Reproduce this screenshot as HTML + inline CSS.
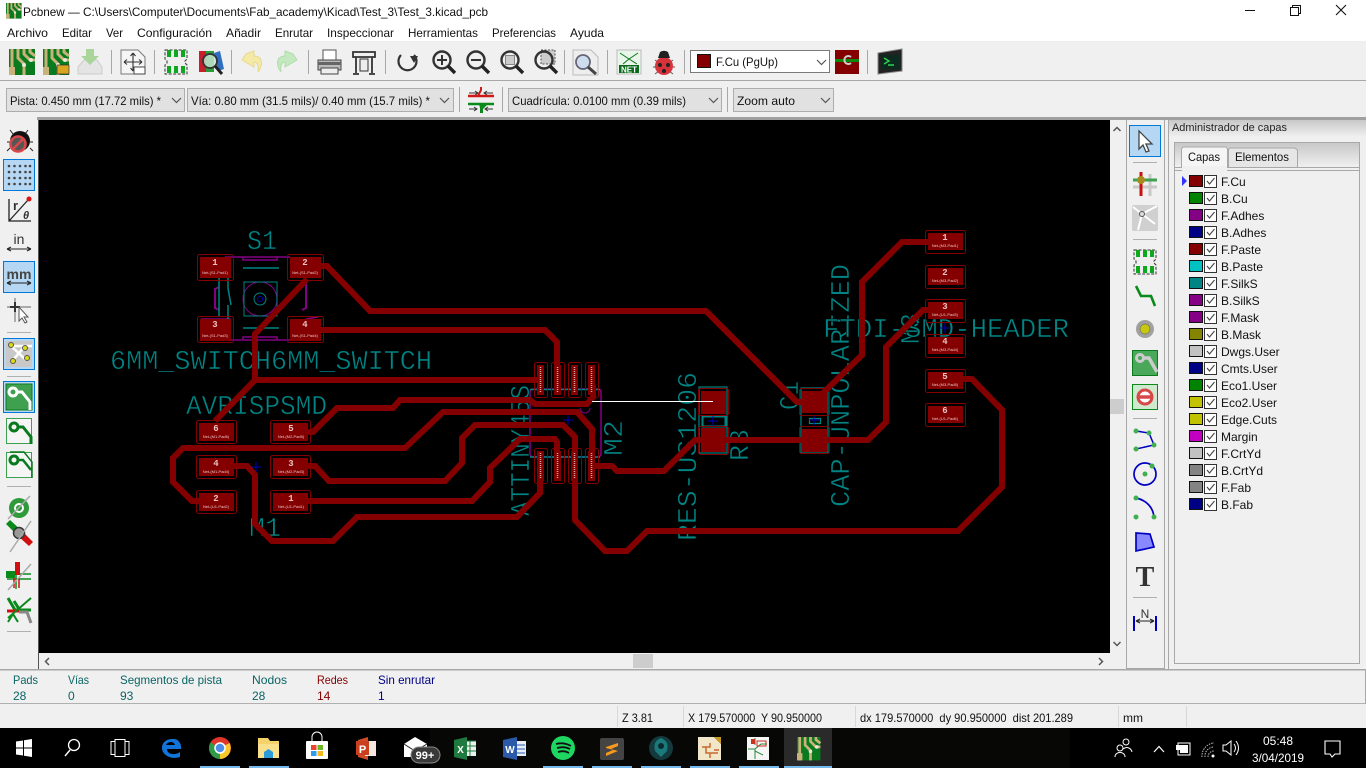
<!DOCTYPE html>
<html><head><meta charset="utf-8"><title>Pcbnew</title>
<style>
html,body{margin:0;padding:0;width:1366px;height:768px;overflow:hidden;background:#f0f0f0}
svg{display:block;font-family:"Liberation Sans",sans-serif;font-size:12px}
.silk{font-family:"Liberation Mono",monospace;font-size:27px;fill:#008484;stroke:#000;stroke-width:.55px;paint-order:fill stroke}
.tr{fill:none;stroke:#840000;stroke-width:6;stroke-linejoin:miter;stroke-linecap:butt}
.pn{font-size:9px;fill:#e8c0c0;text-anchor:middle;font-family:"Liberation Mono",monospace;font-weight:bold}
.pt{font-size:4px;fill:#e8c0c0;text-anchor:middle}
.lay{font-size:12px;fill:#111}
.sep{stroke:#a8a8a8;stroke-width:1}
.wh{fill:#fff;font-size:12px}
</style></head><body>
<svg width="1366" height="768" viewBox="0 0 1366 768" xmlns="http://www.w3.org/2000/svg">
<defs>
<g id="pcb"><rect width="26" height="26" fill="#0a7a1e"/><path d="M3 0V26M9 0V9L15 15V26M15 0V5L21 11H26M21 0V3L26 7" fill="none" stroke="#c9b27a" stroke-width="3"/><path d="M0 18H6V26H0Z" fill="#c9b27a"/><circle cx="22" cy="11" r="2" fill="#e8e8d8"/><circle cx="15" cy="16" r="2" fill="#e8e8d8"/></g>
<g id="mag"><circle cx="10" cy="10" r="8.500" fill="none" stroke="#333" stroke-width="2.400"/><path d="M16 16L23 23" stroke="#222" stroke-width="3.400"/></g>
<path id="chev" d="M0 0L4.500 4.500L9 0" fill="none" stroke="#555" stroke-width="1.200"/>
<g id="fp"><path d="M1 0H23V9L21 11V13L23 15V24H1V15L3 13V11L1 9Z" fill="#eee" stroke="#333" stroke-width="1" stroke-dasharray="3 1.500"/><rect x="3" y="0" width="4" height="7" fill="#0da81e"/><rect x="10" y="0" width="4" height="7" fill="#0da81e"/><rect x="17" y="0" width="4" height="7" fill="#0da81e"/><rect x="3" y="16" width="4" height="7" fill="#0da81e"/><rect x="10" y="16" width="4" height="7" fill="#0da81e"/><rect x="17" y="16" width="4" height="7" fill="#0da81e"/></g>
<linearGradient id="ph" x1="0" y1="0" x2="0" y2="1"><stop offset="0" stop-color="#c8c8c8"/><stop offset="1" stop-color="#f0f0f0"/></linearGradient>
</defs>

<!-- title bar and menu -->
<rect width="1366" height="22" fill="#fff"/>
<rect y="22" width="1366" height="20" fill="#fff"/>
<rect y="41" width="1366" height="1" fill="#eee"/>
<g transform="translate(6,3) scale(.6)"><use href="#pcb"/></g>
<text x="23" y="16" textLength="465" lengthAdjust="spacingAndGlyphs" fill="#111">Pcbnew — C:\Users\Computer\Documents\Fab_academy\Kicad\Test_3\Test_3.kicad_pcb</text>
<path d="M1245 10.500H1255" stroke="#111"/>
<path d="M1290.500 7.500H1298.500V15.500H1290.500ZM1292.500 7V5.500H1300.500V13.500H1299" fill="none" stroke="#111"/>
<path d="M1336 5L1346 15M1346 5L1336 15" stroke="#111" stroke-width="1.100"/>
<g fill="#111">
<text x="7" y="37" textLength="41" lengthAdjust="spacingAndGlyphs">Archivo</text>
<text x="62" y="37" textLength="30" lengthAdjust="spacingAndGlyphs">Editar</text>
<text x="106" y="37" textLength="17" lengthAdjust="spacingAndGlyphs">Ver</text>
<text x="137" y="37" textLength="75" lengthAdjust="spacingAndGlyphs">Configuración</text>
<text x="226" y="37" textLength="35" lengthAdjust="spacingAndGlyphs">Añadir</text>
<text x="275" y="37" textLength="38" lengthAdjust="spacingAndGlyphs">Enrutar</text>
<text x="327" y="37" textLength="67" lengthAdjust="spacingAndGlyphs">Inspeccionar</text>
<text x="408" y="37" textLength="70" lengthAdjust="spacingAndGlyphs">Herramientas</text>
<text x="492" y="37" textLength="64" lengthAdjust="spacingAndGlyphs">Preferencias</text>
<text x="570" y="37" textLength="34" lengthAdjust="spacingAndGlyphs">Ayuda</text>
</g>

<!-- toolbars background -->
<rect y="42" width="1366" height="78" fill="#f0f0f0"/>
<rect y="80" width="1366" height="1" fill="#a8a8a8"/>
<rect y="117" width="1366" height="3" fill="#a0a0a0"/>
<rect y="117" width="37" height="3" fill="#f0f0f0"/>
<g class="sep">
<path d="M111.500 50V74M154.500 50V74M231.500 50V74M308.500 50V74M385.500 50V74M564.500 50V74M607.500 50V74M684.500 50V74M867.500 50V74"/>
<path d="M459.500 87V112M502.500 87V112M727.500 87V112"/>
</g>

<!-- top toolbar icons -->
<use href="#pcb" x="9" y="49"/>
<use href="#pcb" x="43" y="49"/>
<rect x="57" y="65" width="12" height="9" fill="#d9a520" stroke="#333" stroke-width=".7"/>
<path d="M78 67L84 60H97L102 67V74H78Z" fill="#e4e4e4" stroke="#ccc"/><path d="M86 49H94V56H99L90 65L81 56H86Z" fill="#a9d49a"/>
<g transform="translate(121,50)"><path d="M0 0H17L24 7V24H0Z" fill="#f5f5f5" stroke="#777"/><path d="M12 3V21M3 12H21M12 3L9.500 6M12 3L14.500 6M12 21L9.500 18M12 21L14.500 18M3 12L6 9.500M3 12L6 14.500M21 12L18 9.500M21 12L18 14.500" fill="none" stroke="#333" stroke-width="1.100"/><rect x="13" y="17" width="11" height="7" fill="#fff" stroke="#444"/></g>
<use href="#fp" x="164" y="50"/>
<g transform="translate(199,51)"><rect width="7" height="21" fill="#c8202a"/><rect x="7" width="8" height="21" fill="#2a9a3a"/><path d="M15 2L21 0L25 18L19 20Z" fill="#2f6fc0"/><circle cx="11" cy="10" r="7" fill="#cfe8d8" fill-opacity=".8" stroke="#333" stroke-width="1.800"/><path d="M16 15L23 23" stroke="#222" stroke-width="3"/></g>
<path d="M246 54L254 51V56C262 56 264 64 258 72C259 65 257 62 254 62V67L242 60Z" fill="#f5e9a8" stroke="#e6d98a"/>
<path d="M293 54L285 51V56C277 56 275 64 281 72C280 65 282 62 285 62V67L297 60Z" fill="#c4e8c0" stroke="#b0dcab"/>
<g transform="translate(317,50)"><rect x="6" y="0" width="13" height="10" fill="#fff" stroke="#555"/><path d="M1 10H24V20H1Z" fill="#bbb" stroke="#444"/><rect x="4" y="18" width="17" height="6" fill="#eee" stroke="#444"/><rect x="1" y="12" width="23" height="3" fill="#666"/></g>
<g transform="translate(352,51)" fill="none" stroke="#333" stroke-width="1.800"><path d="M1 1H23V6H1ZM4 6V22M20 6V22M1 23H7M17 23H23"/><path d="M8 8H16V20H8Z" stroke-width="1" fill="#eee"/></g>
<path d="M401 55A9 9 0 1 0 414 55" fill="none" stroke="#333" stroke-width="2.200"/><path d="M410 56L418 56L414 63Z" fill="#333"/>
<g transform="translate(432,50)"><use href="#mag"/><path d="M5 10H15M10 5V15" stroke="#333" stroke-width="2"/></g>
<g transform="translate(466,50)"><use href="#mag"/><path d="M5 10H15" stroke="#333" stroke-width="2"/></g>
<g transform="translate(500,50)"><use href="#mag"/><rect x="5.500" y="5.500" width="9" height="9" fill="#ccc" stroke="#888"/></g>
<g transform="translate(534,50)"><rect x="7" y="0" width="14" height="14" fill="#ccc" stroke="#555" stroke-dasharray="2 1.500"/><use href="#mag"/></g>
<g transform="translate(573,50)"><path d="M0 0H18L25 7V25H0Z" fill="#eee" stroke="#bbb"/><circle cx="10" cy="12" r="7" fill="#cdddee" stroke="#667" stroke-width="1.800"/><path d="M15 17L23 24" stroke="#444" stroke-width="3"/></g>
<g transform="translate(617,50)"><rect width="24" height="24" fill="#eaf5ea" stroke="#bbb"/><path d="M3 3L12 9L21 3M6 14L12 9L20 14" stroke="#0a7a1e" fill="none"/><rect x="2" y="15" width="20" height="8" fill="#0a6a1a"/><text x="12" y="22.500" text-anchor="middle" style="font-size:8px;font-weight:bold" fill="#fff">NET</text></g>
<g transform="translate(653,50)"><path d="M2 10L6 13M20 10L16 13M0 17H4M22 17H18M2 24L6 21M20 24L16 21" stroke="#555"/><ellipse cx="11" cy="16" rx="9" ry="9" fill="#d8323a"/><path d="M7 2A6 5 0 0 1 15 2L17 8H5Z" fill="#222"/><circle cx="7" cy="15" r="2" fill="#222"/><circle cx="15" cy="15" r="2" fill="#222"/><circle cx="11" cy="21" r="2" fill="#222"/></g>
<rect x="690.500" y="50.500" width="139" height="22" fill="#fff" stroke="#7a7a7a"/>
<rect x="697.500" y="54.500" width="13" height="13" fill="#840000" stroke="#111"/>
<text x="716" y="66" textLength="62" lengthAdjust="spacingAndGlyphs" fill="#111">F.Cu (PgUp)</text>
<use href="#chev" x="817" y="60"/>
<rect x="835" y="50" width="24" height="24" fill="#840000"/><rect x="835" y="59" width="24" height="3" fill="#0a8a0a"/><path d="M851 57A4 4 0 1 0 851 63" fill="none" stroke="#ccc" stroke-width="2"/>
<g transform="translate(877,49)"><path d="M1 4L25 0V22L1 25Z" fill="#222" stroke="#888"/><rect x="4" y="6" width="18" height="14" fill="#0d2a20"/><path d="M7 9L12 12L7 15M11 16H17" fill="none" stroke="#2fd050" stroke-width="1.500"/></g>

<!-- second toolbar -->
<g fill="#e1e1e1" stroke="#adadad">
<rect x="6.500" y="88.500" width="178" height="23"/>
<rect x="187.500" y="88.500" width="266" height="23"/>
<rect x="508.500" y="88.500" width="213" height="23"/>
<rect x="733.500" y="88.500" width="100" height="23"/>
</g>
<g fill="#111">
<text x="10" y="105" textLength="151" lengthAdjust="spacingAndGlyphs">Pista: 0.450 mm (17.72 mils) *</text>
<text x="191" y="105" textLength="239" lengthAdjust="spacingAndGlyphs">Vía: 0.80 mm (31.5 mils)/ 0.40 mm (15.7 mils) *</text>
<text x="512" y="105" textLength="174" lengthAdjust="spacingAndGlyphs">Cuadrícula: 0.0100 mm (0.39 mils)</text>
<text x="737" y="105" textLength="58" lengthAdjust="spacingAndGlyphs">Zoom auto</text>
</g>
<use href="#chev" x="172" y="98"/><use href="#chev" x="440" y="98"/><use href="#chev" x="709" y="98"/><use href="#chev" x="821" y="98"/>
<g transform="translate(468,87)"><path d="M1 6H10M25 6H16M7 4L10 6L7 8M19 4L16 6L19 8" fill="none" stroke="#333"/><path d="M0 9H26" stroke="#d01818" stroke-width="2.500"/><path d="M10 9L13 3V0" stroke="#d01818" stroke-width="2" fill="none"/><path d="M0 17H26" stroke="#0a8a1a" stroke-width="2.500"/><path d="M11 17H20L15 22V26H12V21Z" fill="#0a8a1a"/><path d="M1 22H9M25 22H17M6 20L9 22L6 24M20 20L17 22L20 24" fill="none" stroke="#333"/></g>

<!-- canvas -->
<rect x="39" y="120" width="1071" height="533" fill="#000"/>
<rect x="38" y="120" width="1" height="550" fill="#555"/>

<!-- silk text -->
<text class="silk" x="247" y="249" textLength="30" lengthAdjust="spacingAndGlyphs">S1</text>
<text class="silk" x="110" y="369" textLength="322" lengthAdjust="spacingAndGlyphs">6MM_SWITCH6MM_SWITCH</text>
<text class="silk" x="186" y="414" textLength="141" lengthAdjust="spacingAndGlyphs">AVRISPSMD</text>
<text class="silk" x="249" y="536" textLength="32" lengthAdjust="spacingAndGlyphs">M1</text>
<text class="silk" transform="translate(529,516) rotate(-90)" textLength="131" lengthAdjust="spacingAndGlyphs">ATTINY45S</text>
<text class="silk" transform="translate(622,456) rotate(-90)" textLength="36" lengthAdjust="spacingAndGlyphs">M2</text>
<text class="silk" transform="translate(696,541) rotate(-90)" textLength="169" lengthAdjust="spacingAndGlyphs">RES-US1206</text>
<text class="silk" transform="translate(748,461) rotate(-90)" textLength="32" lengthAdjust="spacingAndGlyphs">R3</text>
<text class="silk" transform="translate(798,410) rotate(-90)" textLength="29" lengthAdjust="spacingAndGlyphs">C1</text>
<text class="silk" transform="translate(849,507) rotate(-90)" textLength="243" lengthAdjust="spacingAndGlyphs">CAP-UNPOLARIZED</text>
<text class="silk" transform="translate(919,344) rotate(-90)" textLength="31" lengthAdjust="spacingAndGlyphs">M3</text>
<text class="silk" x="823" y="337" textLength="246" lengthAdjust="spacingAndGlyphs">FTDI-SMD-HEADER</text>

<!-- S1 silk -->
<g fill="none" stroke="#840084" stroke-width="1.500">
<path d="M225 257H290M225 340H290M243 257V260H277V257M243 340V337H277V340"/>
<path d="M219 287L215 289V308L219 310M306 280V308L302 310" stroke-width="2"/>
<circle cx="260" cy="299" r="17" stroke-width="1"/>
<path d="M201 319H231M306 319L318 317" stroke-width="1.500"/>
</g>
<g fill="none" stroke="#008484" stroke-width="1.500">
<path d="M243 268H279M243 328H279M219 278V317M228 278V288L231 305M228 305V335"/>
<rect x="244" y="282" width="33" height="34" stroke-width="1"/>
<circle cx="260" cy="299" r="6" stroke-width="1"/>
</g>
<circle cx="260" cy="299" r="2.500" fill="none" stroke="#0000c0"/>

<!-- IC silk -->
<rect x="530" y="389" width="71" height="68" rx="3" fill="none" stroke="#840084" stroke-width="1.500"/>
<path d="M530 389.500H600M530 457H600" stroke="#008484" stroke-width="1.500"/>
<path d="M580 408A5 5 0 0 0 590 408" fill="none" stroke="#840084"/>

<!-- R3 / C1 silk -->
<g fill="none" stroke="#008484" stroke-width="1.200">
<rect x="699" y="387" width="28" height="66"/>
<rect x="702.500" y="416.500" width="23" height="10" stroke-width="2"/>
<rect x="801" y="388" width="27" height="65"/>
<rect x="809.500" y="418.500" width="11" height="5"/>
</g>
<g stroke="#0000c0" fill="none"><path d="M708 421H718M713 416V426M809 420H819M814 415V425M251 467H261M256 462V472M940 328H950M945 323V333M563 420H573M568 415V425"/></g>

<!-- pads -->
<g fill="#840000">
<rect x="200" y="257" width="31" height="21"/><rect x="290" y="257" width="31" height="21"/>
<rect x="200" y="319" width="31" height="22"/><rect x="290" y="319" width="31" height="22"/>
<rect x="199" y="423" width="35" height="18"/><rect x="273" y="423" width="35" height="18"/>
<rect x="199" y="458" width="35" height="18"/><rect x="273" y="458" width="35" height="18"/>
<rect x="199" y="493" width="35" height="18"/><rect x="273" y="493" width="35" height="18"/>
<rect x="928" y="233" width="35" height="17"/><rect x="928" y="268" width="35" height="17"/>
<rect x="928" y="302" width="35" height="17"/><rect x="928" y="337" width="35" height="17"/>
<rect x="928" y="372" width="35" height="17"/><rect x="928" y="406" width="35" height="17"/>
<rect x="537" y="365" width="7" height="30"/><rect x="554" y="365" width="7" height="30"/><rect x="571" y="365" width="7" height="30"/><rect x="588" y="365" width="7" height="30"/>
<rect x="537" y="451" width="7" height="30"/><rect x="554" y="451" width="7" height="30"/><rect x="571" y="451" width="7" height="30"/><rect x="588" y="451" width="7" height="30"/>
<rect x="701" y="391" width="25" height="23"/><rect x="701" y="428" width="25" height="24"/>
<rect x="802" y="391" width="25" height="22"/><rect x="802" y="429" width="25" height="23"/>
</g>
<g fill="none" stroke="#840000">
<rect x="197.500" y="254.500" width="36" height="26" rx="2"/><rect x="287.500" y="254.500" width="36" height="26" rx="2"/>
<rect x="197.500" y="316.500" width="36" height="26" rx="2"/><rect x="287.500" y="316.500" width="36" height="26" rx="2"/>
<rect x="196.500" y="420.500" width="40" height="23" rx="2"/><rect x="270.500" y="420.500" width="40" height="23" rx="2"/>
<rect x="196.500" y="455.500" width="40" height="23" rx="2"/><rect x="270.500" y="455.500" width="40" height="23" rx="2"/>
<rect x="196.500" y="490.500" width="40" height="23" rx="2"/><rect x="270.500" y="490.500" width="40" height="23" rx="2"/>
<rect x="925.500" y="230.500" width="40" height="23" rx="2"/><rect x="925.500" y="265.500" width="40" height="23" rx="2"/>
<rect x="925.500" y="299.500" width="40" height="23" rx="2"/><rect x="925.500" y="334.500" width="40" height="23" rx="2"/>
<rect x="925.500" y="369.500" width="40" height="23" rx="2"/><rect x="925.500" y="403.500" width="40" height="23" rx="2"/>
<rect x="534.500" y="362.500" width="13" height="35" rx="2"/><rect x="551.500" y="362.500" width="13" height="35" rx="2"/><rect x="568.500" y="362.500" width="13" height="35" rx="2"/><rect x="585.500" y="362.500" width="13" height="35" rx="2"/>
<rect x="534.500" y="448.500" width="13" height="35" rx="2"/><rect x="551.500" y="448.500" width="13" height="35" rx="2"/><rect x="568.500" y="448.500" width="13" height="35" rx="2"/><rect x="585.500" y="448.500" width="13" height="35" rx="2"/>
<rect x="698.500" y="388.500" width="30" height="27" rx="2"/><rect x="698.500" y="426.500" width="30" height="28" rx="2"/>
<rect x="799.500" y="388.500" width="30" height="27" rx="2"/><rect x="799.500" y="426.500" width="30" height="27" rx="2"/>
</g>

<!-- tracks -->
<g class="tr">
<path d="M320 266H327L370 311H706L797 402H815"/>
<path d="M307 279L255 334V380L215 421M255 380H540V385"/>
<path d="M320 330H545L557 342V390"/>
<path d="M306 432H313L337 408H393L400 400H530L535 404H587L593 397V385"/>
<path d="M215 501H192L173 482V458L183 448H405L443 412H577L592 429V470"/>
<path d="M232 466H247L255 475V524L272 541H333L357 517H517L540 493V470"/>
<path d="M306 466H315L329 481H445L462 463V438L475 425H563L575 437V520L605 551H627L647 531H958L1002 487V410L972 379H960"/>
<path d="M306 501H472L490 482V468L520 439H555L557 442V470"/>
<path d="M593 466H612L617 471H664L695 440H868L886 422V347L923 310H945"/>
<path d="M823 393L862 355V282L902 242H945"/>
</g>
<path d="M592 401.500H713" stroke="#fff" stroke-width="1"/>

<!-- pad labels -->
<g>
<text class="pn" x="215" y="265">1</text><text class="pt" x="215" y="274">Net-(S1-Pad1)</text>
<text class="pn" x="305" y="265">2</text><text class="pt" x="305" y="274">Net-(S1-Pad2)</text>
<text class="pn" x="215" y="327">3</text><text class="pt" x="215" y="337">Net-(S1-Pad3)</text>
<text class="pn" x="305" y="327">4</text><text class="pt" x="305" y="337">Net-(S1-Pad4)</text>
<text class="pn" x="216" y="431">6</text><text class="pt" x="216" y="438">Net-(M1-Pad6)</text>
<text class="pn" x="291" y="431">5</text><text class="pt" x="291" y="438">Net-(M2-Pad5)</text>
<text class="pn" x="216" y="466">4</text><text class="pt" x="216" y="473">Net-(M1-Pad4)</text>
<text class="pn" x="291" y="466">3</text><text class="pt" x="291" y="473">Net-(M2-Pad3)</text>
<text class="pn" x="216" y="501">2</text><text class="pt" x="216" y="508">Net-(U1-Pad2)</text>
<text class="pn" x="291" y="501">1</text><text class="pt" x="291" y="508">Net-(U1-Pad1)</text>
<text class="pn" x="945" y="240">1</text><text class="pt" x="945" y="247">Net-(M3-Pad1)</text>
<text class="pn" x="945" y="275">2</text><text class="pt" x="945" y="282">Net-(M3-Pad2)</text>
<text class="pn" x="945" y="309">3</text><text class="pt" x="945" y="316">Net-(U1-Pad3)</text>
<text class="pn" x="945" y="344">4</text><text class="pt" x="945" y="351">Net-(M3-Pad4)</text>
<text class="pn" x="945" y="379">5</text><text class="pt" x="945" y="386">Net-(M3-Pad5)</text>
<text class="pn" x="945" y="413">6</text><text class="pt" x="945" y="420">Net-(U1-Pad6)</text>
</g>
<g stroke="#d8a8a8" stroke-width="1.500" stroke-dasharray="1 1">
<path d="M540.500 367V392M557.500 367V392M574.500 367V392M591.500 367V392M540.500 453V478M557.500 453V478M574.500 453V478M591.500 453V478"/>
</g>

<!-- scrollbars -->
<rect x="1110" y="120" width="16" height="549" fill="#f0f0f0"/>
<rect x="39" y="653" width="1087" height="16" fill="#f0f0f0"/>
<rect x="1110" y="399" width="14" height="15" fill="#cdcdcd"/>
<rect x="633" y="654" width="20" height="14" fill="#cdcdcd"/>
<path d="M1113.500 131L1117 127.500L1120.500 131M1113.500 642L1117 645.500L1120.500 642M49 658L45.500 661.500L49 665M1099 658L1102.500 661.500L1099 665" fill="none" stroke="#555" stroke-width="1.500"/>

<!-- left toolbar icons -->
<rect x="0" y="120" width="38" height="550" fill="#f0f0f0"/>
<g transform="translate(7,130)"><path d="M6 4L3 0M18 4L21 0M3 12H0M23 12H26M3 18L0 21M23 18L26 21" stroke="#222"/><ellipse cx="13" cy="11" rx="10" ry="10" fill="#111"/><circle cx="11" cy="14" r="7.500" fill="#555" stroke="#d8484a" stroke-width="2.600"/><path d="M6 19L16 9" stroke="#d8484a" stroke-width="2.600"/></g>
<g fill="#b5d7f3" stroke="#0078d7">
<rect x="3.500" y="159.500" width="31" height="31"/>
<rect x="3.500" y="261.500" width="31" height="31"/>
<rect x="3.500" y="338.500" width="31" height="31"/>
<rect x="3.500" y="381.500" width="31" height="31"/>
</g>
<g fill="#444"><circle cx="9" cy="166" r="1.300"/><circle cx="14.500" cy="166" r="1.300"/><circle cx="20" cy="166" r="1.300"/><circle cx="25.500" cy="166" r="1.300"/><circle cx="30" cy="166" r="1.300"/><circle cx="9" cy="172" r="1.300"/><circle cx="14.500" cy="172" r="1.300"/><circle cx="20" cy="172" r="1.300"/><circle cx="25.500" cy="172" r="1.300"/><circle cx="30" cy="172" r="1.300"/><circle cx="9" cy="178" r="1.300"/><circle cx="14.500" cy="178" r="1.300"/><circle cx="20" cy="178" r="1.300"/><circle cx="25.500" cy="178" r="1.300"/><circle cx="30" cy="178" r="1.300"/><circle cx="9" cy="184" r="1.300"/><circle cx="14.500" cy="184" r="1.300"/><circle cx="20" cy="184" r="1.300"/><circle cx="25.500" cy="184" r="1.300"/><circle cx="30" cy="184" r="1.300"/></g>
<path d="M9 199V221H31M9 221L28 200" fill="none" stroke="#222" stroke-width="1.300"/><circle cx="29" cy="199" r="2.500" fill="#e01010"/>
<text x="13" y="210" style="font-size:13px;font-weight:bold" fill="#333">r</text>
<text x="23" y="219" style="font-size:11px;font-weight:bold;font-style:italic" fill="#333">θ</text>
<text x="19" y="244" text-anchor="middle" style="font-size:14px" fill="#333">in</text>
<path d="M7 249H31M7 249L11 247M7 249L11 251M31 249L27 247M31 249L27 251" stroke="#222" fill="none"/>
<text x="19" y="279" text-anchor="middle" style="font-size:14px;font-weight:bold" fill="#444">mm</text>
<path d="M7 283H31M7 283L11 281M7 283L11 285M31 283L27 281M31 283L27 285" stroke="#222" fill="none"/>
<path d="M15 298V322M7 307H31" stroke="#aaa" stroke-width="2"/><path d="M10 307H20M15 302V312" stroke="#333" stroke-width="2"/><path d="M19 307V321L22 318L25 323L27 322L24 317H28Z" fill="#fff" stroke="#555"/>
<path d="M7 332.500H31M7 376.500H31M7 486.500H31M7 631.500H31" stroke="#b0b0b0"/>
<rect x="6" y="341" width="26" height="26" rx="2" fill="#c8c8c8"/>
<path d="M11 346L26 360M25 346L13 360M11 346H32" stroke="#fff" stroke-width="2.500"/>
<g fill="#dcdc10" stroke="#555"><circle cx="11" cy="345" r="2.500"/><circle cx="25" cy="348" r="2.500"/><circle cx="13" cy="361" r="2.500"/><circle cx="27" cy="358" r="2.500"/></g>
<rect x="6" y="384" width="26" height="26" fill="#3fa050" stroke="#0a7a1e"/><circle cx="13" cy="392" r="4" fill="none" stroke="#fff" stroke-width="3"/><path d="M16 392H22L30 402V410" fill="none" stroke="#fff" stroke-width="3"/>
<rect x="6.500" y="418.500" width="25" height="25" fill="#f5f5f5" stroke="#3fa050"/><circle cx="14" cy="427" r="4" fill="none" stroke="#0a7a1e" stroke-width="3"/><path d="M17 427H23L31 437V444" fill="none" stroke="#0a7a1e" stroke-width="3"/>
<rect x="6.500" y="452.500" width="25" height="25" fill="#f5f5f5" stroke="#3fa050"/><circle cx="14" cy="460" r="4" fill="none" stroke="#0a7a1e" stroke-width="3"/><path d="M10 452H24L32 462V478" fill="none" stroke="#0a7a1e" stroke-width="1.500"/><path d="M17 460H23L31 470" fill="none" stroke="#0a7a1e" stroke-width="2.500"/>
<circle cx="19" cy="508" r="10" fill="#2f9a3a"/><circle cx="19" cy="508" r="5" fill="#fff"/><circle cx="19" cy="508" r="3" fill="#2f9a3a"/><path d="M8 519L30 496" stroke="#aaa" stroke-width="1.500"/>
<path d="M6 524L10 520L22 531L18 536Z" fill="#0a8a1a"/><path d="M18 536L22 531L33 542L29 546Z" fill="#d01010"/><circle cx="19" cy="533" r="5.500" fill="#999" stroke="#333" stroke-width="1.500"/><path d="M10 552L31 521" stroke="#aaa" stroke-width="1.500"/>
<path d="M16 562V589M7 574H31M7 579H31" stroke="#0a8a1a" stroke-width="1.500"/><path d="M15 562H20V575H15Z" fill="#d01010"/><rect x="6" y="571" width="9" height="7" fill="#0a8a1a"/><path d="M14 578V588M19 578V588" stroke="#d01010" stroke-width="1.500"/><path d="M8 590L31 564" stroke="#aaa" stroke-width="1.500"/>
<path d="M8 598L15 610H31M14 601L19 609" fill="none" stroke="#0a8a1a" stroke-width="3"/><path d="M7 611H19" stroke="#d01010" stroke-width="3"/><path d="M19 612H27L31 623" fill="none" stroke="#888" stroke-width="3"/><path d="M8 622L13 614L18 622M8 618L31 598" fill="none" stroke="#0a8a1a" stroke-width="2"/>

<!-- right toolbar -->
<rect x="1126" y="120" width="42" height="549" fill="#f0f0f0"/>
<rect x="1126" y="120" width="1" height="549" fill="#a8a8a8"/>
<rect x="1164" y="120" width="1" height="549" fill="#a8a8a8"/>
<rect x="1126" y="668" width="39" height="1" fill="#a8a8a8"/>
<rect x="1168" y="120" width="1" height="549" fill="#a8a8a8"/>
<rect x="1129.500" y="125.500" width="31" height="31" fill="#b5d7f3" stroke="#0078d7"/>
<path d="M1139 131V149L1143 145L1146 152L1149 151L1146 144H1152Z" fill="#fff" stroke="#444" stroke-width="1.300"/>
<path d="M1133 162.500H1157M1133 239.500H1157M1133 418.500H1157M1133 597.500H1157" stroke="#b0b0b0"/>
<path d="M1141 172V196M1150 174V196M1133 187H1157" stroke="#c8c8c8" stroke-width="3"/><path d="M1133 180H1157" stroke="#3fa050" stroke-width="3"/><path d="M1141 172V196" stroke="#c81010" stroke-width="3"/><circle cx="1141" cy="180" r="4" fill="#a88a20"/>
<rect x="1132" y="205" width="26" height="26" rx="2" fill="#d0d0d0"/><path d="M1142 214L1157 206M1142 214L1155 224M1142 214L1138 230M1142 214L1133 207" stroke="#fff" stroke-width="2"/><circle cx="1142" cy="214" r="2.500" fill="#ddd" stroke="#555"/>
<use href="#fp" x="1133" y="250"/>
<path d="M1136 286L1141 296H1151L1155 306" fill="none" stroke="#0a8a1a" stroke-width="2.600"/>
<circle cx="1145" cy="329" r="9" fill="#a0a0a0"/><circle cx="1145" cy="329" r="5" fill="#c8c810" stroke="#555" stroke-width=".5"/>
<rect x="1132.500" y="350.500" width="25" height="25" fill="#4aa85a" stroke="#0a7a1e"/><circle cx="1140" cy="358" r="3.500" fill="none" stroke="#ccc" stroke-width="3"/><path d="M1143 358H1149L1157 372" fill="none" stroke="#ccc" stroke-width="3.500"/>
<rect x="1132.500" y="384.500" width="25" height="25" fill="#cfe9cf" stroke="#0a8a1a"/><circle cx="1145" cy="397" r="7" fill="#fff" stroke="#d84848" stroke-width="3"/><path d="M1139 397H1151" stroke="#d84848" stroke-width="3.500"/>
<path d="M1136 431L1149 433L1154 445L1136 449" fill="none" stroke="#0000c0" stroke-width="1.500"/><g fill="#3fb050"><circle cx="1136" cy="431" r="2.500"/><circle cx="1149" cy="433" r="2.500"/><circle cx="1154" cy="445" r="2.500"/><circle cx="1136" cy="449" r="2.500"/></g>
<circle cx="1145" cy="474" r="11" fill="none" stroke="#0000c0" stroke-width="1.700"/><circle cx="1145" cy="474" r="2.500" fill="#3fb050"/><circle cx="1152" cy="466" r="2.500" fill="#3fb050"/>
<path d="M1136 498C1146 500 1153 507 1154 517" fill="none" stroke="#0000c0" stroke-width="1.700"/><g fill="#3fb050"><circle cx="1136" cy="498" r="2.500"/><circle cx="1136" cy="517" r="2.500"/><circle cx="1154" cy="517" r="2.500"/></g>
<path d="M1136 533L1150 534L1154 547L1136 551Z" fill="#8888ff" stroke="#0000c0" stroke-width="1.700"/>
<text x="1145" y="586" text-anchor="middle" style="font-size:28px;font-family:'Liberation Serif',serif;font-weight:bold" fill="#333">T</text>
<path d="M1134 616V631M1156 616V631" stroke="#0000c0" stroke-width="2"/><path d="M1136 621H1154M1136 621L1140 619M1136 621L1140 623M1154 621L1150 619M1154 621L1150 623" stroke="#222" fill="none"/>
<text x="1145" y="618" text-anchor="middle" style="font-size:12px" fill="#333">N</text>

<!-- layer manager -->
<rect x="1169" y="120" width="197" height="549" fill="#f0f0f0"/>
<rect x="1169" y="120" width="197" height="17" fill="url(#ph)"/>
<text x="1172" y="131" textLength="115" lengthAdjust="spacingAndGlyphs" style="font-size:11px" fill="#222">Administrador de capas</text>
<rect x="1174.500" y="142.500" width="185" height="521" fill="#f0f0f0" stroke="#a8a8a8"/>
<rect x="1175" y="143" width="184" height="24" fill="url(#ph)"/>
<path d="M1175 167.500H1359M1175 170.500H1359" stroke="#a8a8a8"/>
<path d="M1228.500 167V149.500L1230 148H1295L1297.500 150V167" fill="#e6e6e6" stroke="#a8a8a8"/>
<path d="M1181.500 168V149L1183 147H1226L1227.500 149V168" fill="#f5f5f5" stroke="#a8a8a8"/>
<rect x="1182" y="166" width="45" height="5" fill="#f0f0f0"/>
<text x="1188" y="161" textLength="32" lengthAdjust="spacingAndGlyphs" fill="#111">Capas</text>
<text x="1235" y="161" textLength="54" lengthAdjust="spacingAndGlyphs" fill="#111">Elementos</text>
<path d="M1182 176L1187 181L1182 186Z" fill="#3333ff"/>

<g stroke="#111">
<rect x="1189.500" y="175.500" width="13" height="11" fill="#840000"/>
<rect x="1189.500" y="192.500" width="13" height="11" fill="#008400"/>
<rect x="1189.500" y="209.500" width="13" height="11" fill="#840084"/>
<rect x="1189.500" y="226.500" width="13" height="11" fill="#000084"/>
<rect x="1189.500" y="243.500" width="13" height="11" fill="#840000"/>
<rect x="1189.500" y="260.500" width="13" height="11" fill="#00c2c2"/>
<rect x="1189.500" y="277.500" width="13" height="11" fill="#008484"/>
<rect x="1189.500" y="294.500" width="13" height="11" fill="#840084"/>
<rect x="1189.500" y="311.500" width="13" height="11" fill="#840084"/>
<rect x="1189.500" y="328.500" width="13" height="11" fill="#848400"/>
<rect x="1189.500" y="345.500" width="13" height="11" fill="#c2c2c2"/>
<rect x="1189.500" y="362.500" width="13" height="11" fill="#000084"/>
<rect x="1189.500" y="379.500" width="13" height="11" fill="#008400"/>
<rect x="1189.500" y="396.500" width="13" height="11" fill="#c2c200"/>
<rect x="1189.500" y="413.500" width="13" height="11" fill="#c2c200"/>
<rect x="1189.500" y="430.500" width="13" height="11" fill="#c200c2"/>
<rect x="1189.500" y="447.500" width="13" height="11" fill="#c2c2c2"/>
<rect x="1189.500" y="464.500" width="13" height="11" fill="#848484"/>
<rect x="1189.500" y="481.500" width="13" height="11" fill="#848484"/>
<rect x="1189.500" y="498.500" width="13" height="11" fill="#000084"/>
</g>
<g fill="#fff" stroke="#333">
<rect x="1204.500" y="175.500" width="12" height="12"/><rect x="1204.500" y="192.500" width="12" height="12"/><rect x="1204.500" y="209.500" width="12" height="12"/><rect x="1204.500" y="226.500" width="12" height="12"/><rect x="1204.500" y="243.500" width="12" height="12"/><rect x="1204.500" y="260.500" width="12" height="12"/><rect x="1204.500" y="277.500" width="12" height="12"/><rect x="1204.500" y="294.500" width="12" height="12"/><rect x="1204.500" y="311.500" width="12" height="12"/><rect x="1204.500" y="328.500" width="12" height="12"/><rect x="1204.500" y="345.500" width="12" height="12"/><rect x="1204.500" y="362.500" width="12" height="12"/><rect x="1204.500" y="379.500" width="12" height="12"/><rect x="1204.500" y="396.500" width="12" height="12"/><rect x="1204.500" y="413.500" width="12" height="12"/><rect x="1204.500" y="430.500" width="12" height="12"/><rect x="1204.500" y="447.500" width="12" height="12"/><rect x="1204.500" y="464.500" width="12" height="12"/><rect x="1204.500" y="481.500" width="12" height="12"/><rect x="1204.500" y="498.500" width="12" height="12"/>
</g>
<path d="M1207 181l2.500 3 5-6M1207 198l2.500 3 5-6M1207 215l2.500 3 5-6M1207 232l2.500 3 5-6M1207 249l2.500 3 5-6M1207 266l2.500 3 5-6M1207 283l2.500 3 5-6M1207 300l2.500 3 5-6M1207 317l2.500 3 5-6M1207 334l2.500 3 5-6M1207 351l2.500 3 5-6M1207 368l2.500 3 5-6M1207 385l2.500 3 5-6M1207 402l2.500 3 5-6M1207 419l2.500 3 5-6M1207 436l2.500 3 5-6M1207 453l2.500 3 5-6M1207 470l2.500 3 5-6M1207 487l2.500 3 5-6M1207 504l2.500 3 5-6" fill="none" stroke="#444" stroke-width="1.100"/>
<g class="lay">
<text x="1221" y="186">F.Cu</text><text x="1221" y="203">B.Cu</text><text x="1221" y="220">F.Adhes</text><text x="1221" y="237">B.Adhes</text><text x="1221" y="254">F.Paste</text><text x="1221" y="271">B.Paste</text><text x="1221" y="288">F.SilkS</text><text x="1221" y="305">B.SilkS</text><text x="1221" y="322">F.Mask</text><text x="1221" y="339">B.Mask</text><text x="1221" y="356">Dwgs.User</text><text x="1221" y="373">Cmts.User</text><text x="1221" y="390">Eco1.User</text><text x="1221" y="407">Eco2.User</text><text x="1221" y="424">Edge.Cuts</text><text x="1221" y="441">Margin</text><text x="1221" y="458">F.CrtYd</text><text x="1221" y="475">B.CrtYd</text><text x="1221" y="492">F.Fab</text><text x="1221" y="509">B.Fab</text>
</g>

<!-- message panel -->
<rect y="669" width="1366" height="35" fill="#f0f0f0"/>
<rect y="669" width="1366" height="1.500" fill="#a8a8a8"/>
<rect y="703" width="1366" height="1" fill="#b0b0b0"/>
<rect x="1365" y="670" width="1" height="34" fill="#a8a8a8"/>
<g fill="#0a6464">
<text x="13" y="684" textLength="25" lengthAdjust="spacingAndGlyphs">Pads</text><text x="13" y="700">28</text>
<text x="68" y="684" textLength="21" lengthAdjust="spacingAndGlyphs">Vías</text><text x="68" y="700">0</text>
<text x="120" y="684" textLength="102" lengthAdjust="spacingAndGlyphs">Segmentos de pista</text><text x="120" y="700">93</text>
<text x="252" y="684" textLength="35" lengthAdjust="spacingAndGlyphs">Nodos</text><text x="252" y="700">28</text>
</g>
<g fill="#840000"><text x="317" y="684" textLength="31" lengthAdjust="spacingAndGlyphs">Redes</text><text x="317" y="700">14</text></g>
<g fill="#000084"><text x="378" y="684" textLength="57" lengthAdjust="spacingAndGlyphs">Sin enrutar</text><text x="378" y="700">1</text></g>

<!-- status bar -->
<rect y="704" width="1366" height="24" fill="#f0f0f0"/>
<path d="M617.500 706V727M855.500 706V727M1118.500 706V727M1186.500 706V727M683.500 706V727" stroke="#d8d8d8"/>
<g fill="#111">
<text x="622" y="722" textLength="31" lengthAdjust="spacingAndGlyphs">Z 3.81</text>
<text x="688" y="722" textLength="134" lengthAdjust="spacingAndGlyphs" xml:space="preserve">X 179.570000  Y 90.950000</text>
<text x="860" y="722" textLength="213" lengthAdjust="spacingAndGlyphs" xml:space="preserve">dx 179.570000  dy 90.950000  dist 201.289</text>
<text x="1123" y="722" textLength="20" lengthAdjust="spacingAndGlyphs">mm</text>
</g>

<!-- taskbar -->
<rect y="728" width="1366" height="40" fill="#000"/>
<rect x="430" y="728" width="640" height="40" fill="#070705"/>
<rect x="784" y="728" width="48" height="40" fill="#2a2a2a"/>
<path d="M16 741.500L23 740.500V747.500H16ZM24 740.300L32 739V747.500H24ZM16 748.500H23V755.500L16 754.500ZM24 748.500H32V757L24 755.700Z" fill="#fff"/>
<circle cx="74" cy="745" r="5.500" fill="none" stroke="#fff" stroke-width="1.300"/><path d="M70 750L65 756" stroke="#fff" stroke-width="1.400"/>
<path d="M114.500 741.500H111V754.500H114.500M125.500 741.500H129V754.500H125.500M115 739.500H125V756.500H115Z" fill="none" stroke="#fff" stroke-width="1"/>
<path d="M172 739C178 738 182 744 181 749H167C167 754 174 756 180 752V757C171 760 162 755 162 748C162 742 167 739 172 739ZM166 745H175C174 741 168 741 166 745Z" fill="#1274d8"/>
<circle cx="220" cy="748" r="11" fill="#e0352a"/><path d="M220 748L229.500 743A11 11 0 0 1 220 759Z" fill="#f8c82a"/><path d="M220 748V759A11 11 0 0 1 210.500 742.500Z" fill="#2f9a48"/><circle cx="220" cy="748" r="5" fill="#4f8ce8" stroke="#fff" stroke-width="1.500"/>
<path d="M258 738H268L270 741H279V758H258Z" fill="#f5d36a"/><rect x="258" y="744" width="21" height="14" fill="#f9e08c"/><path d="M264 758V752L268.500 749L273 752V758Z" fill="#2f9ad8"/>
<rect x="306" y="741" width="22" height="18" rx="1" fill="#fff"/><path d="M312 741V737A5 5 0 0 1 322 737V741" fill="none" stroke="#fff"/><rect x="311" y="745" width="5.500" height="5" fill="#e8452a"/><rect x="317.500" y="745" width="5.500" height="5" fill="#6ab82a"/><rect x="311" y="751" width="5.500" height="5" fill="#2f9ae8"/><rect x="317.500" y="751" width="5.500" height="5" fill="#f5b81a"/>
<path d="M358 740L368 737V760L358 757Z" fill="#d04a28"/><rect x="365" y="741" width="11" height="15" fill="#f5e8e0"/><rect x="356" y="741" width="13" height="14" fill="#c8401e"/><text x="362.500" y="753" text-anchor="middle" style="font-size:11px;font-weight:bold" fill="#fff">P</text>
<path d="M404 744L415 737L427 744V757H404Z" fill="#fff"/><path d="M404 744L415 751L427 744" fill="none" stroke="#222"/>
<rect x="411" y="747" width="29" height="16" rx="8" fill="#3a3a3a" stroke="#888"/>
<text x="425" y="759" text-anchor="middle" class="wh" style="font-size:11px;font-weight:bold">99+</text>
<rect x="460" y="741" width="16" height="15" fill="#e8f2ea"/><path d="M464 741H476M464 746H476M464 751H476M470 741V756" stroke="#1f7a40"/><path d="M454 740L467 737V760L454 757Z" fill="#1f7a40"/><text x="460.500" y="753" text-anchor="middle" style="font-size:10px;font-weight:bold" fill="#fff">X</text>
<rect x="510" y="741" width="16" height="15" fill="#e8eef8"/><path d="M517 745H525M517 749H525M517 753H525" stroke="#2a5aa8"/><path d="M503 740L517 737V760L503 757Z" fill="#2a5aa8"/><text x="510" y="753" text-anchor="middle" style="font-size:10px;font-weight:bold" fill="#fff">W</text>
<circle cx="563" cy="748" r="12" fill="#1ed760"/><path d="M556 744Q564 742 571 746M557 748Q564 746 570 749M558 752Q564 750 569 753" fill="none" stroke="#111" stroke-width="1.800"/>
<rect x="600" y="738" width="24" height="22" rx="2" fill="#444"/><path d="M606 747L618 743V746L611 749L618 751L606 756V753L613 750L606 748Z" fill="#f59a1a"/>
<circle cx="661" cy="748" r="12" fill="#133a3e"/><path d="M655 751C653 742 657 740 661 738C665 740 669 742 667 751L661 757Z" fill="#1a7a7a"/><circle cx="661" cy="746" r="3" fill="#0a2a2e"/>
<g transform="translate(698,737)"><path d="M0 0H16L23 7V23H0Z" fill="#f2e6c8"/><path d="M16 0H23V7Z" fill="#c89a20"/><path d="M4 10H12V6M8 10V16H20M12 16V21M16 13H21" fill="none" stroke="#c86830" stroke-width="1.500"/></g>
<g transform="translate(747,737)"><rect width="22" height="23" fill="#f5f5f5"/><path d="M8 1V8M8 12V22M1 12H8M8 12L14 7H20M8 14L16 18" fill="none" stroke="#2a8a3a"/><rect x="10" y="4" width="9" height="5" fill="none" stroke="#c83020"/><rect x="4" y="2" width="4" height="5" fill="#c83020"/></g>
<g transform="translate(797,737) scale(.9)"><use href="#pcb"/></g>
<g fill="#76b9ed">
<rect x="200" y="766" width="40" height="2"/><rect x="249" y="766" width="40" height="2"/><rect x="543" y="766" width="40" height="2"/><rect x="592" y="766" width="40" height="2"/><rect x="641" y="766" width="40" height="2"/><rect x="690" y="766" width="40" height="2"/><rect x="739" y="766" width="40" height="2"/><rect x="784" y="766" width="48" height="2"/>
</g>
<circle cx="1126" cy="742" r="3" fill="none" stroke="#fff"/><circle cx="1120" cy="748" r="3" fill="none" stroke="#fff"/><path d="M1115 757C1115 751 1125 751 1125 757M1123 749C1127 746 1131 748 1132 752" fill="none" stroke="#fff"/>
<path d="M1154 752L1159 746.500L1164 752" fill="none" stroke="#fff" stroke-width="1.200"/>
<path d="M1178 743H1190V755H1178Z" fill="none" stroke="#fff"/><rect x="1180" y="745" width="8" height="8" fill="#fff"/><rect x="1176" y="745" width="4" height="5" fill="#fff"/>
<path d="M1202 757A13 13 0 0 1 1214 743M1205 757A9 9 0 0 1 1214 747M1208 757A6 6 0 0 1 1214 751" fill="none" stroke="#bbb" stroke-dasharray="1.500 1"/><circle cx="1213" cy="756" r="1.500" fill="#fff"/>
<path d="M1223 745H1226L1231 741V755L1226 751H1223ZM1234 744Q1237 748 1234 752M1236 741Q1241 748 1236 755" fill="none" stroke="#fff"/>
<text x="1278" y="745" text-anchor="middle" class="wh">05:48</text>
<text x="1252" y="762" class="wh" textLength="52" lengthAdjust="spacingAndGlyphs">3/04/2019</text>
<path d="M1325 741H1340V754H1335L1332 757L1330 754H1325Z" fill="none" stroke="#fff" stroke-width="1.100"/>
</svg>
</body></html>
